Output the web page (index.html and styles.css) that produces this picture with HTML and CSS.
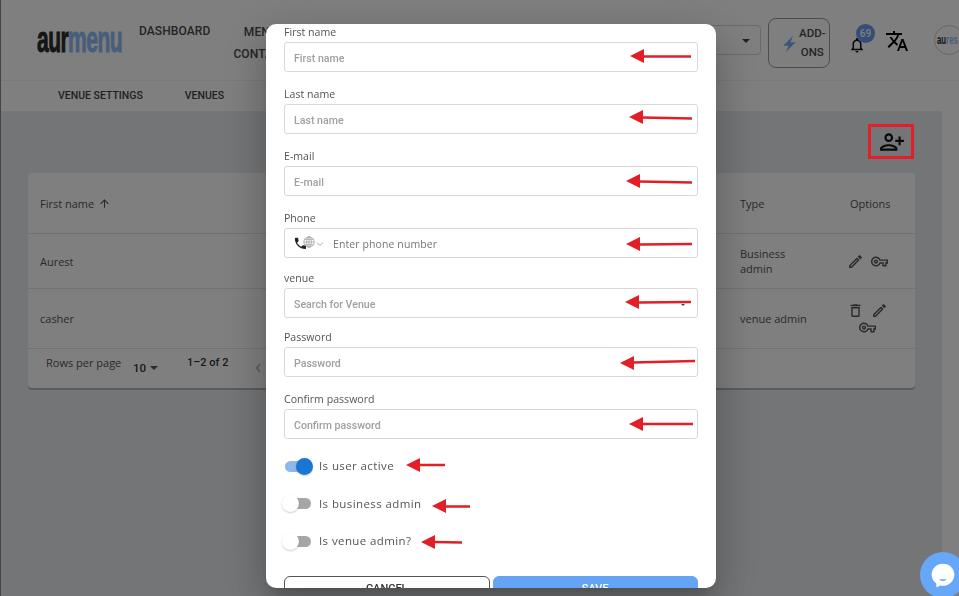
FILE: index.html
```html
<!DOCTYPE html>
<html lang="en">
<head>
<meta charset="utf-8">
<title>Users</title>
<link rel="stylesheet" href="styles.css">
</head>
<body>
<div class="page">
  <header class="topbar">
    <div class="logo"><span class="logo-text"><span class="logo-dark">aur</span><span class="logo-blue">menu</span></span></div>
    <nav class="nav">
      <a class="nav-link">DASHBOARD</a>
      <a class="nav-link nav-wrap">MENU<br>CONTACT</a>
    </nav>
    <div class="select-box"><span class="caret"></span></div>
    <button class="addons">
      <svg class="bolt" viewBox="0 0 24 24"><path d="M17 2L5 14h6.500L8 22l12-12h-6.500z"/></svg>
      <span class="addons-text">ADD-<br>ONS</span>
    </button>
    <div class="bell">
      <svg class="bell-icon" viewBox="0 0 24 24"><path d="M12 22c1.100 0 2-.9 2-2h-4c0 1.100.9 2 2 2zm6-6v-5c0-3.070-1.630-5.640-4.500-6.320V4c0-.83-.67-1.500-1.500-1.500s-1.500.67-1.500 1.500v.68C7.640 5.360 6 7.920 6 11v5l-2 2v1h16v-1l-2-2zm-2 1H8v-6c0-2.480 1.510-4.500 4-4.500s4 2.020 4 4.500v6z"/></svg>
      <span class="badge">69</span>
    </div>
    <svg class="translate" viewBox="0 0 24 24"><path d="M12.870 15.070l-2.540-2.510.03-.03c1.740-1.940 2.980-4.170 3.710-6.530H17V4h-7V2H8v2H1v1.990h11.170C11.500 7.920 10.440 9.750 9 11.350 8.070 10.320 7.300 9.190 6.690 8h-2c.73 1.630 1.730 3.170 2.980 4.560l-5.090 5.020L4 19l5-5 3.110 3.110.76-2.040zM18.500 10h-2L12 22h2l1.120-3h4.750L21 22h2l-4.500-12zm-2.620 7l1.620-4.330L19.120 17h-3.240z"/></svg>
    <div class="avatar"><span class="avatar-text"><span class="logo-dark">au</span><span class="logo-blue">res</span></span></div>
  </header>
  <div class="tabs">
    <a class="tab">VENUE SETTINGS</a>
    <a class="tab">VENUES</a>
  </div>
  <main class="content">
    <div class="toolbar">
      <svg class="add-user" viewBox="0 0 24 24"><path transform="matrix(-1 0 0 1 24 0)" d="M15 12c2.210 0 4-1.790 4-4s-1.790-4-4-4-4 1.790-4 4 1.790 4 4 4zm0-6c1.100 0 2 .9 2 2s-.9 2-2 2-2-.9-2-2 .9-2 2-2zm0 8c-2.670 0-8 1.340-8 4v2h16v-2c0-2.660-5.330-4-8-4zm-6 4c.22-.72 3.310-2 6-2 2.700 0 5.800 1.290 6 2H9zm-3-3v-3h3v-2H6V7H4v3H1v2h3v3h2z"/></svg>
    </div>
    <section class="card">
      <div class="row row-head">
        <div class="cell-name">First name
          <svg class="sort" viewBox="0 0 24 24"><path d="M4 12l1.410 1.410L11 7.830V20h2V7.830l5.580 5.590L20 12l-8-8-8 8z"/></svg>
        </div>
        <div class="cell-type">Type</div>
        <div class="cell-options">Options</div>
      </div>
      <div class="row row-one">
        <div class="cell-name">Aurest</div>
        <div class="cell-type">Business admin</div>
        <div class="cell-options">
          <svg class="opt" viewBox="0 0 24 24"><path d="M14.060 9.020l.92.92L5.920 19H5v-.92l9.060-9.060M17.660 3c-.25 0-.51.1-.7.29l-1.830 1.830 3.750 3.750 1.830-1.830c.39-.39.39-1.020 0-1.410l-2.340-2.340c-.2-.2-.45-.29-.71-.29zm-3.600 3.190L3 17.250V21h3.750L17.810 9.940l-3.750-3.750z"/></svg>
          <svg class="opt" viewBox="0 0 24 24"><path d="M22 19h-6v-4h-2.680c-1.140 2.420-3.600 4-6.320 4-3.860 0-7-3.140-7-7s3.140-7 7-7c2.720 0 5.170 1.580 6.320 4H24v6h-2v4zm-4-2h2v-4h2v-2H11.940l-.23-.67C11.010 8.340 9.110 7 7 7c-2.760 0-5 2.240-5 5s2.240 5 5 5c2.110 0 4.010-1.340 4.710-3.330l.23-.67H18v4zM7 15c-1.650 0-3-1.350-3-3s1.350-3 3-3 3 1.350 3 3-1.350 3-3 3zm0-4c-.55 0-1 .45-1 1s.45 1 1 1 1-.45 1-1-.45-1-1-1z"/></svg>
        </div>
      </div>
      <div class="row row-two">
        <div class="cell-name">casher</div>
        <div class="cell-type">venue admin</div>
        <div class="cell-options">
          <svg class="opt" viewBox="0 0 24 24"><path d="M6 19c0 1.100.9 2 2 2h8c1.100 0 2-.9 2-2V7H6v12zM8 9h8v10H8V9zm7.500-5l-1-1h-5l-1 1H5v2h14V4z"/></svg>
          <svg class="opt" viewBox="0 0 24 24"><path d="M14.060 9.020l.92.92L5.920 19H5v-.92l9.060-9.060M17.660 3c-.25 0-.51.1-.7.29l-1.830 1.830 3.750 3.750 1.830-1.830c.39-.39.39-1.020 0-1.410l-2.340-2.340c-.2-.2-.45-.29-.71-.29zm-3.600 3.190L3 17.250V21h3.750L17.810 9.940l-3.750-3.750z"/></svg>
          <svg class="opt" viewBox="0 0 24 24"><path d="M22 19h-6v-4h-2.680c-1.140 2.420-3.600 4-6.320 4-3.860 0-7-3.140-7-7s3.140-7 7-7c2.720 0 5.170 1.580 6.320 4H24v6h-2v4zm-4-2h2v-4h2v-2H11.940l-.23-.67C11.010 8.340 9.110 7 7 7c-2.760 0-5 2.240-5 5s2.240 5 5 5c2.110 0 4.010-1.340 4.710-3.330l.23-.67H18v4zM7 15c-1.650 0-3-1.350-3-3s1.350-3 3-3 3 1.350 3 3-1.350 3-3 3zm0-4c-.55 0-1 .45-1 1s.45 1 1 1 1-.45 1-1-.45-1-1-1z"/></svg>
        </div>
      </div>
      <div class="pager">
        <span class="pager-label">Rows per page</span>
        <span class="pager-size">10<span class="caret caret-small"></span></span>
        <span class="pager-range">1–2 of 2</span>
        <span class="pager-prev">‹</span>
      </div>
    </section>
  </main>
</div>

<div class="overlay">
  <div class="modal">
    <div class="field">
      <label class="field-label">First name</label>
      <div class="input"><span class="placeholder">First name</span></div>
    </div>
    <div class="field">
      <label class="field-label">Last name</label>
      <div class="input"><span class="placeholder">Last name</span></div>
    </div>
    <div class="field">
      <label class="field-label">E-mail</label>
      <div class="input"><span class="placeholder">E-mail</span></div>
    </div>
    <div class="field field-phone">
      <label class="field-label">Phone</label>
      <div class="input input-phone">
        <svg class="phone-flag" viewBox="0 0 22 16">
          <path class="phone-handset" transform="translate(-1 0) scale(.62)" d="M6.620 10.790c1.440 2.830 3.760 5.140 6.590 6.590l2.200-2.200c.27-.27.67-.36 1.020-.24 1.120.37 2.330.57 3.570.57.55 0 1 .45 1 1V20c0 .55-.45 1-1 1-9.390 0-17-7.610-17-17 0-.55.45-1 1-1h3.500c.55 0 1 .45 1 1 0 1.250.2 2.450.57 3.570.11.35.03.74-.25 1.020l-2.200 2.200z"/>
          <g class="phone-globe"><circle cx="15" cy="6" r="5.200"/><ellipse cx="15" cy="6" rx="2.300" ry="5.200"/><path d="M9.800 6h10.400M10.600 3.300h8.800M10.600 8.700h8.800M15 .8v10.400"/></g>
        </svg>
        <svg class="chev" viewBox="0 0 8 8"><path d="M1 2.500l3 3 3-3"/></svg>
        <span class="phone-placeholder">Enter phone number</span>
      </div>
    </div>
    <div class="field field-tight">
      <label class="field-label">venue</label>
      <div class="input input-select"><span class="placeholder">Search for Venue</span><span class="caret caret-tiny"></span></div>
    </div>
    <div class="field">
      <label class="field-label">Password</label>
      <div class="input"><span class="placeholder">Password</span></div>
    </div>
    <div class="field field-last">
      <label class="field-label">Confirm password</label>
      <div class="input"><span class="placeholder">Confirm password</span></div>
    </div>
    <div class="switch-row">
      <span class="switch switch-on"><span class="thumb"></span></span>
      <span class="switch-label">Is user active</span>
    </div>
    <div class="switch-row">
      <span class="switch"><span class="thumb"></span></span>
      <span class="switch-label">Is business admin</span>
    </div>
    <div class="switch-row">
      <span class="switch"><span class="thumb"></span></span>
      <span class="switch-label">Is venue admin?</span>
    </div>
    <div class="actions">
      <button class="btn btn-cancel">CANCEL</button>
      <button class="btn btn-save">SAVE</button>
    </div>
  </div>
</div>

<svg class="annotations" viewBox="0 0 959 596">
  <rect class="mark-box" x="869.500" y="125.500" width="43" height="32"/>
  <g class="mark-arrow">
    <path d="M643 56.500L691 56.500"/><polygon points="630,56 644,49 644,63"/>
    <path d="M642 117.500L692 118.500"/><polygon points="629,117 643,110 643,124"/>
    <path d="M639 181.500L692 182.500"/><polygon points="626,181 640,174 640,188"/>
    <path d="M639 244.500L692 244"/><polygon points="626,244 640,237 640,251"/>
    <path d="M638 302.500L691 302"/><polygon points="625,302 639,295 639,309"/>
    <path d="M633 362.500L695 361"/><polygon points="620,363 634,356 634,370"/>
    <path d="M642 424L693 424"/><polygon points="629,424 643,417 643,431"/>
    <path d="M418 465L445 465"/><polygon points="406,465 420,458 420,472"/>
    <path d="M444 506.500L470 506.500"/><polygon points="432,506 446,499 446,513"/>
    <path d="M433 542L462 542.500"/><polygon points="421,542 435,535 435,549"/>
  </g>
</svg>

<button class="chat" aria-label="Chat">
  <svg class="chat-icon" viewBox="0 0 24 24">
    <path class="chat-shape" d="M12 1.500c6 0 10.500 4.500 10.500 10s-4.500 10.500-10.500 10.500c-.9 0-1.800-.1-2.600-.3L6 23.500l-.3-3.800C3 17.800 1.500 14.800 1.500 11.500 1.500 6 6 1.500 12 1.500z"/>
    <path class="chat-smile" d="M8.500 16c1.500 2 5.500 2 7 0z"/>
  </svg>
</button>
</body>
</html>
```

FILE: styles.css
```css
* { box-sizing: border-box; }
html, body { margin: 0; height: 100%; }
body {
  width: 959px;
  height: 596px;
  overflow: hidden;
  background: #fff;
  font-family: "Open Sans", "Liberation Sans", sans-serif;
  color: #555;
  border-left: 1px solid #888;
}

.page { height: 596px; display: flex; flex-direction: column; }

/* top bar */
.topbar {
  height: 81px;
  flex: none;
  display: flex;
  align-items: center;
  padding-left: 36px;
  border-bottom: 1px solid #f2f2f2;
  font-family: Roboto, sans-serif;
}
.logo { width: 102px; flex: none; margin-top: 3px; }
.logo-text {
  display: inline-block;
  font: 700 37px/24px "Liberation Sans", sans-serif;
  letter-spacing: -1px;
  transform: scale(.57, 1);
  transform-origin: left center;
  white-space: nowrap;
  -webkit-text-stroke: 1px currentColor;
}
.logo-dark { color: #2b2b2b; }
.logo-blue { color: #8fbcf5; }
.nav { display: flex; align-items: flex-start; gap: 33px; width: 200px; flex: none; height: 46px; margin-top: 8px; }
.nav-link { font-size: 12px; font-weight: 500; line-height: 20px; color: #4a4a4a; letter-spacing: .1px; white-space: nowrap; }
.nav-wrap { text-align: center; line-height: 22px; margin-left: -10px; }
.select-box {
  margin-left: auto;
  width: 120px;
  height: 30px;
  border: 1px solid #d4d4d4;
  border-radius: 4px;
  display: flex;
  align-items: center;
  justify-content: flex-end;
  padding-right: 10px;
  padding-top: 3px;
  margin-top: -1px;
}
.caret { width: 0; height: 0; border-left: 4px solid transparent; border-right: 4px solid transparent; border-top: 4px solid #444; }
.addons {
  margin-left: 7px;
  width: 62px;
  height: 50px;
  flex: none;
  background: transparent;
  border: 1px solid #999;
  border-radius: 8px;
  display: flex;
  align-items: center;
  padding: 0 0 0 10px;
  font: 500 11.500px/19px Roboto, sans-serif;
  color: #4a4a4a;
  margin-top: 6px;
}
.bolt { width: 20px; height: 20px; fill: #78aaf5; flex: none; margin-top: 2px; }
.addons-text { text-align: center; }
.bell { position: relative; width: 18px; height: 18px; margin-left: 18px; flex: none; margin-top: 10px; }
.bell-icon { width: 18px; height: 18px; fill: #111; display: block; }
.badge {
  position: absolute;
  left: 8px;
  top: -12px;
  width: 19px;
  height: 19px;
  border-radius: 50%;
  background: #6a9cf0;
  color: #fff;
  font: 500 10px/19px Roboto, sans-serif;
  text-align: center;
}
.translate { width: 24px; height: 24px; fill: #000; flex: none; margin-left: 19px; margin-top: 1px; }
.avatar {
  width: 30px;
  height: 30px;
  flex: none;
  margin-left: 25px;
  margin-right: -5px;
  margin-top: -1px;
  border-radius: 50%;
  border: 1px solid #ccc;
  display: flex;
  align-items: center;
  padding-left: 2px;
  overflow: hidden;
}
.avatar-text { font: 700 13px/12px "Liberation Sans", sans-serif; transform: scaleX(.6); transform-origin: left center; white-space: nowrap; }

/* tabs */
.tabs {
  height: 30px;
  flex: none;
  display: flex;
  align-items: center;
  gap: 42px;
  padding-left: 57px;
  font: 500 10.500px/14px Roboto, sans-serif;
  color: #444;
}
.tab { white-space: nowrap; }

/* content */
.content { width: 941px; flex: 1; background: #e8ebef; display: flex; flex-direction: column; padding: 0 27px; }
.toolbar { height: 62px; flex: none; display: flex; justify-content: flex-end; align-items: center; padding-right: 10px; }
.add-user { width: 26px; height: 26px; fill: #111; }
.card {
  background: #fff;
  border-radius: 4px;
  height: 215px;
  width: 887px;
  box-shadow: 0 2px 0 #b8b8b8;
  font-size: 11px;
  color: #555;
}
.row { display: flex; align-items: center; border-bottom: 1px solid #e4e4e4; padding-left: 12px; }
.row-head { height: 61px; }
.row-one { height: 55px; }
.row-two { height: 60px; }
.cell-name { flex: 1; display: flex; align-items: center; gap: 4px; }
.cell-type { width: 110px; line-height: 15px; padding-right: 33px; }
.cell-options { width: 65px; display: flex; flex-wrap: wrap; gap: 0 7px; padding-right: 10px; justify-content: flex-start; }
.row-one .cell-options, .row-two .cell-options { margin-left: -3px; margin-right: 3px; }
.row-two .cell-options { justify-content: center; padding-right: 18px; margin-left: -6px; margin-right: 6px; }
.sort { width: 13px; height: 13px; fill: #555; }
.opt { width: 17px; height: 17px; fill: #555; }
.pager { display: flex; height: 38px; font-family: "Open Sans", sans-serif; padding-left: 18px; padding-top: 6px; }
.pager-label { font-size: 11px; line-height: 16px; width: 87px; }
.pager-size { font: 500 11.500px/14px Roboto, sans-serif; color: #333; padding-top: 6px; width: 54px; display: flex; gap: 4px; }
.caret-small { margin-top: 5px; border-top-color: #555; }
.pager-range { font: 500 11px/16px Roboto, sans-serif; color: #333; width: 68px; }
.pager-prev { font: 400 20px/20px Roboto, sans-serif; color: #aaa; padding-top: 2px; }

/* dim layer and dialog */
.overlay {
  position: fixed;
  inset: 0;
  background: rgba(0, 0, 0, .5);
  padding: 24px 0 8px 266px;
}
.modal {
  width: 450px;
  height: 564px;
  background: #fff;
  border-radius: 10px;
  padding: 0 18px;
  overflow: hidden;
  box-shadow: 0 11px 15px -7px rgba(0,0,0,.2), 0 24px 38px 3px rgba(0,0,0,.14), 0 9px 46px 8px rgba(0,0,0,.12);
}
.field { margin-bottom: 14px; }
.field-phone { margin-bottom: 12px; }
.field-tight { margin-bottom: 11px; }
.field-label { display: block; height: 16px; margin-bottom: 2px; font-size: 10.600px; line-height: 16px; color: #555; }
.input {
  height: 30px;
  border: 1px solid #d8d8d8;
  border-radius: 3px;
  display: flex;
  align-items: center;
  padding: 4px 0 0 9px;
}
.placeholder { font: 500 10.600px/14px Roboto, sans-serif; color: #a0a0a0; }
.input-phone { padding-top: 2px; }
.caret-tiny { margin-left: auto; margin-right: 12px; border-left-width: 2px; border-right-width: 2px; border-top-width: 2px; }
.phone-flag { width: 22px; height: 16px; flex: none; }
.phone-handset { fill: #222; }
.phone-globe { fill: none; stroke: #999; stroke-width: .7; }
.chev { width: 8px; height: 8px; flex: none; fill: none; stroke: #aaa; stroke-width: 1; }
.phone-placeholder { margin-left: 9px; font-size: 10.500px; color: #777; letter-spacing: .1px; }
.field-last { margin-bottom: 17px; }
.switch-row { display: flex; align-items: center; height: 20px; margin-bottom: 17.500px; }
.switch {
  position: relative;
  width: 26px;
  height: 11px;
  margin-left: 1px;
  border-radius: 6px;
  background: #a6a6a6;
  flex: none;
}
.thumb {
  position: absolute;
  left: -3px;
  top: -3px;
  width: 17px;
  height: 17px;
  border-radius: 50%;
  background: #fff;
  box-shadow: 0 1px 2px rgba(0,0,0,.2);
}
.switch-on { background: #8cb8ec; }
.switch-on .thumb { left: 11px; background: #1976d2; }
.switch-label { margin-left: 8px; font-size: 11.500px; line-height: 16px; color: #555; letter-spacing: .4px; white-space: nowrap; }
.actions { display: flex; gap: 3px; margin-top: 24.500px; }
.btn { flex: 1; height: 26px; border-radius: 6px; font: 500 11px/24px Roboto, sans-serif; padding: 0; }
.btn-cancel { background: #fff; border: 1px solid #555; color: #333; }
.btn-save { background: #65a3f5; border: 1px solid #65a3f5; color: #fff; }

/* red review marks */
.annotations { position: fixed; left: 0; top: 0; width: 959px; height: 596px; pointer-events: none; }
.mark-box { fill: none; stroke: #e21f26; stroke-width: 3; }
.mark-arrow path { fill: none; stroke: #e21f26; stroke-width: 2.500; }
.mark-arrow polygon { fill: #e21f26; }

/* chat launcher */
.chat {
  position: fixed;
  left: 920px;
  top: 552px;
  width: 46px;
  height: 46px;
  border: 0;
  border-radius: 50%;
  background: #66a8f7;
  padding: 10px;
}
.chat-icon { display: block; width: 26px; height: 26px; }
.chat-shape { fill: #fff; }
.chat-smile { fill: #66a8f7; }
```
